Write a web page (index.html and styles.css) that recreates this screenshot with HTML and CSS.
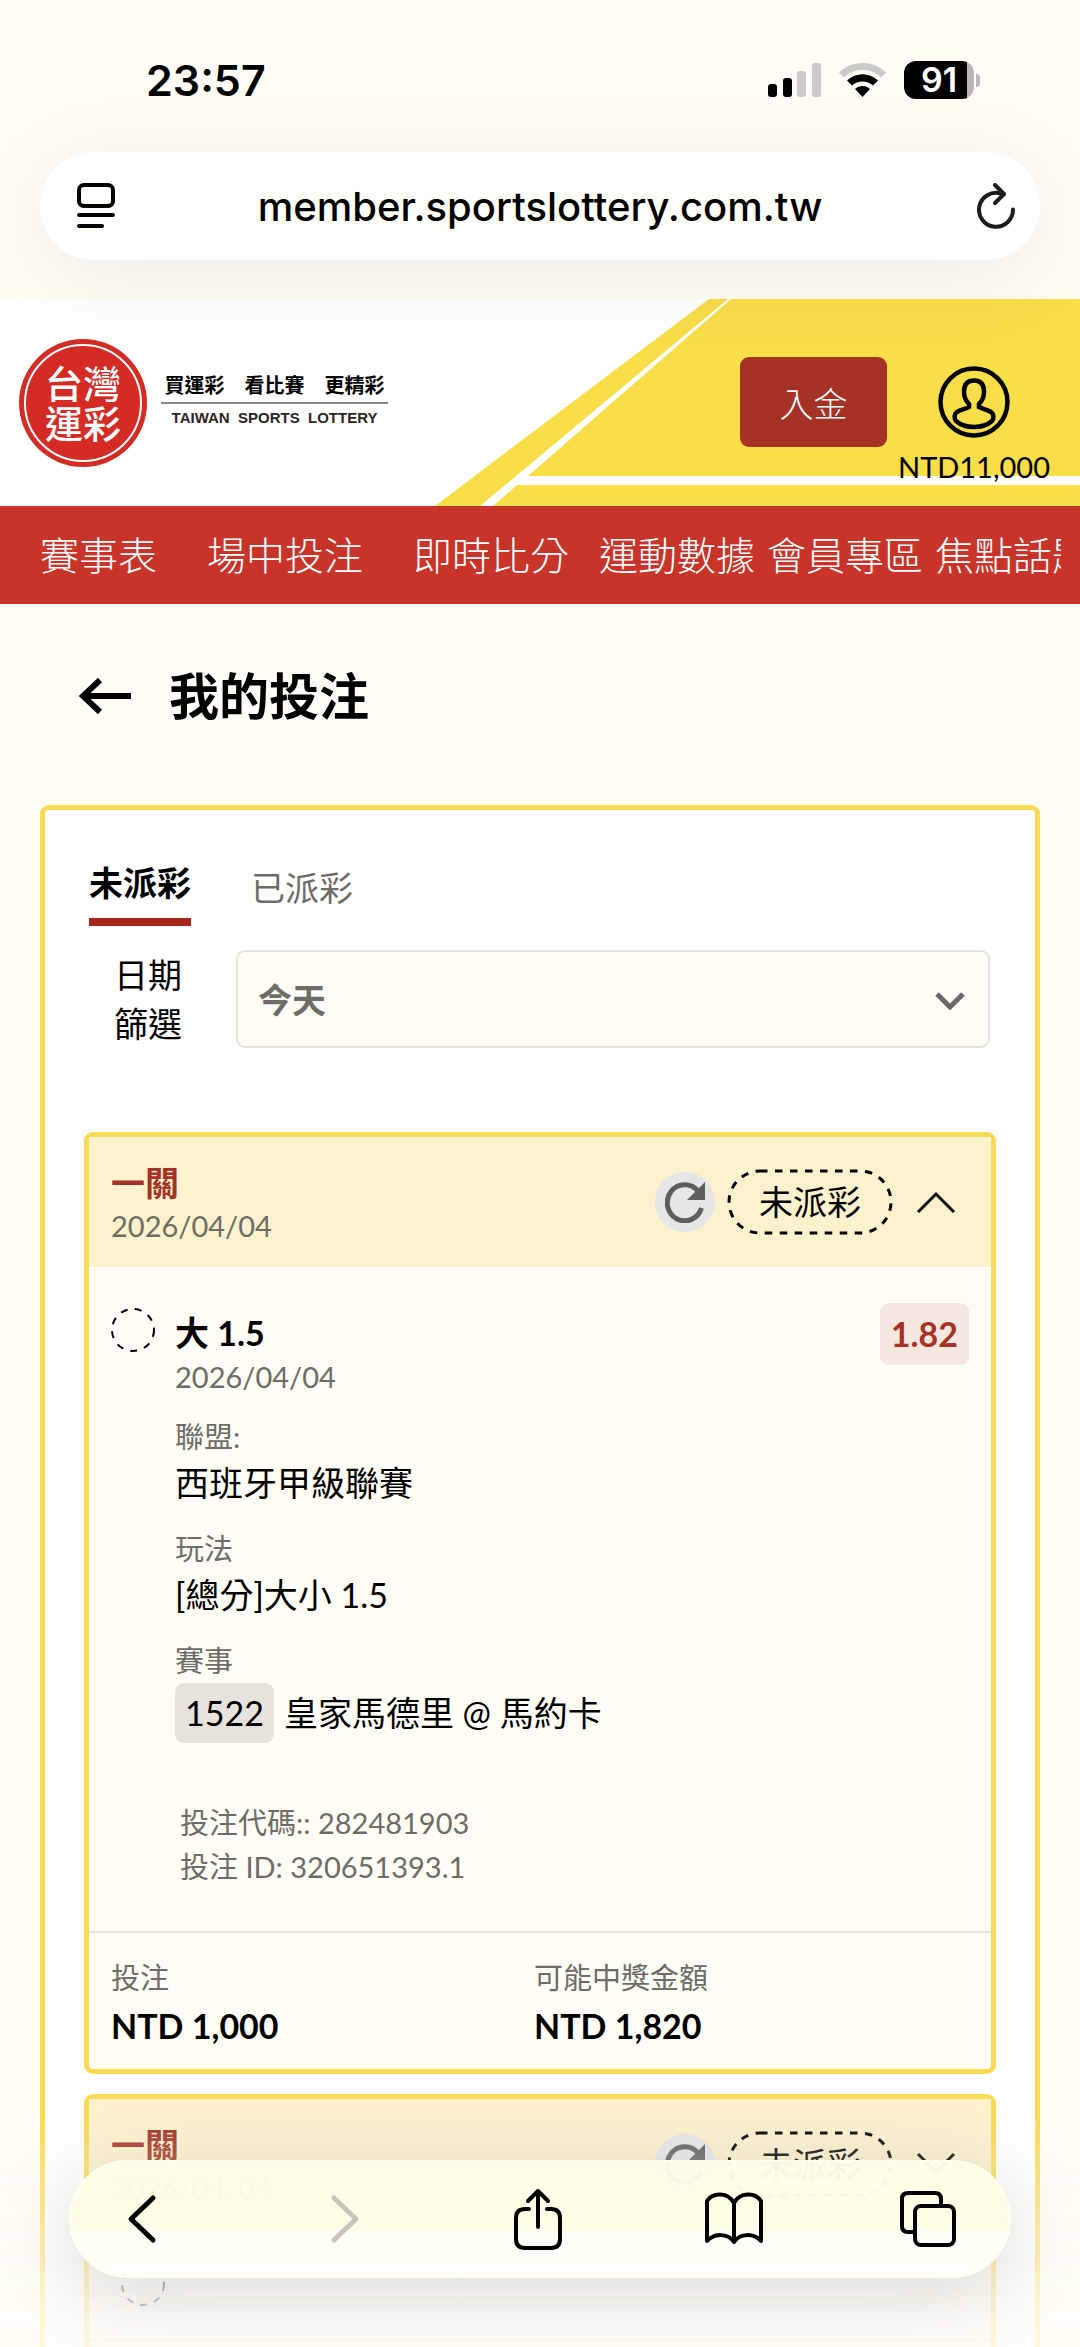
FILE: index.html
```html
<!DOCTYPE html>
<html lang="zh-Hant">
  <head>
    <meta charset="UTF-8" />
    <meta name="viewport" content="width=device-width, initial-scale=1" />
    <title>我的投注 | 台灣運彩</title>
    <link rel="stylesheet" href="styles.css">
  </head>
  <body>
    <div class="browser_top">
      <div class="status">
        <time class="status__time">23:57</time>
        <div class="status__icons">
          <svg width="53" height="34" viewBox="0 0 53 34" aria-hidden="true">
            <rect x="0" y="21" width="9" height="13" rx="3" />
            <rect x="15" y="15" width="9" height="19" rx="3" />
            <rect x="29" y="8" width="9" height="26" rx="3" fill="#cbcac4" />
            <rect x="44" y="0" width="9" height="34" rx="3" fill="#cbcac4" />
          </svg>
          <svg width="47" height="34" viewBox="0 0 47 34" aria-hidden="true">
            <path d="M0 9.500C13-3.200 34-3.200 47 9.500L42 14.500C32 4.500 15 4.500 5 14.500Z" fill="#cbcac4" />
            <path d="M8 17.500C17 9 30 9 39 17.500L34 22.500C28 17 19 17 13 22.500Z" />
            <path d="M16 26C20 22 27 22 31 26L23.500 34Z" />
          </svg>
          <div class="battery"><span class="battery__value">91</span></div>
        </div>
      </div>
      <div class="address">
        <button type="button" class="icon_button" aria-label="頁面選單">
          <svg width="38" height="46" viewBox="0 0 38 46" fill="none" stroke="#000" stroke-width="4" stroke-linecap="round">
            <rect x="2" y="2" width="34" height="21" rx="5" />
            <path d="M2 32H36M2 43H25" />
          </svg>
        </button>
        <span class="address__url">member.sportslottery.com.tw</span>
        <button type="button" class="icon_button" aria-label="重新載入">
          <svg width="38" height="46" viewBox="0 0 38 46" fill="none" stroke="#1c1c18" stroke-width="4" stroke-linecap="round" stroke-linejoin="round">
            <path d="M24 10.500A17 17 0 1 0 36 26.500M18 2L27 11L18 20" />
          </svg>
        </button>
      </div>
    </div>

    <header class="header">
      <svg class="header__bg" viewBox="0 0 1080 207" preserveAspectRatio="xMaxYMid slice" aria-hidden="true">
        <path d="M709 0H1080V207H435Z" fill="#f8de49" />
        <path d="M728 0H731L528 177H1080V186H517L493 207H480Z" fill="#fff" />
      </svg>
      <a href="#" class="logo">
        <span class="logo__mark"><span class="logo__ring">台灣<br>運彩</span></span>
        <span class="logo__texts">
          <span class="logo__slogan">買運彩　看比賽　更精彩</span>
          <span class="logo__en">TAIWAN  SPORTS  LOTTERY</span>
        </span>
      </a>
      <div class="account">
        <button type="button" class="deposit">入金</button>
        <a href="#" class="user">
          <svg width="72" height="74" viewBox="0 0 72 74" fill="none" stroke="#000" stroke-width="4.500" aria-hidden="true">
            <circle cx="36" cy="37" r="33.500" />
            <path d="M31 42V39C28 36 26 32 26 27C26 19 30 15.500 36 15.500S46 19 46 27C46 32 44 36 41 39V42C45 44 49 44.500 53 47C56 49 56 54 54 56C45 64 27 64 18 56C16 54 16 49 19 47C23 44.500 28 44 31 42Z" />
          </svg>
          <span class="user__balance">NTD11,000</span>
        </a>
      </div>
    </header>

    <nav class="nav">
      <ul class="nav__list">
        <li class="nav__item nav__item--wide"><a href="#">賽事表</a></li>
        <li class="nav__item nav__item--wide"><a href="#">場中投注</a></li>
        <li class="nav__item nav__item--middle"><a href="#">即時比分</a></li>
        <li class="nav__item"><a href="#">運動數據</a></li>
        <li class="nav__item"><a href="#">會員專區</a></li>
        <li class="nav__item"><a href="#">焦點話題</a></li>
      </ul>
    </nav>

    <main class="main">
      <div class="page_title">
        <a href="#" class="page_title__back" aria-label="返回">
          <svg width="52" height="36" viewBox="0 0 52 36" fill="none" stroke="#000" stroke-width="6">
            <path d="M4 18H52M21 2L4 18L21 34" />
          </svg>
        </a>
        <h1 class="page_title__text">我的投注</h1>
      </div>

      <section class="panel">
        <div class="tabs" role="tablist">
          <button type="button" role="tab" aria-selected="true" class="tab tab--active">未派彩</button>
          <button type="button" role="tab" aria-selected="false" class="tab">已派彩</button>
        </div>
        <div class="filter">
          <label for="date_filter" class="filter__label">日期篩選</label>
          <div class="filter__box">
            <select id="date_filter" name="date" class="filter__select">
              <option>今天</option>
            </select>
            <svg class="filter__arrow" width="30" height="18" viewBox="0 0 30 18" fill="none" stroke="#6a6963" stroke-width="5" aria-hidden="true">
              <path d="M2 2L15 15L28 2" />
            </svg>
          </div>
        </div>

        <article class="bet">
          <header class="bet__header">
            <div class="bet__heading">
              <h2 class="bet__title">一關</h2>
              <time class="bet__date">2026/04/04</time>
            </div>
            <button type="button" class="refresh" aria-label="更新">
              <svg width="40" height="41" viewBox="0 0 40 41" aria-hidden="true">
                <path d="M33 9A17.500 18 0 1 0 36.500 26" fill="none" stroke="#5d5e60" stroke-width="5" />
                <path d="M40 0V18H22Z" fill="#5d5e60" />
              </svg>
            </button>
            <span class="badge">
              <svg class="badge__line" width="166" height="66" fill="none" stroke="#000" stroke-width="3" stroke-dasharray="7.500 7.500" aria-hidden="true"><rect x="2" y="2" width="162" height="62" rx="31" /></svg>
              未派彩
            </span>
            <button type="button" class="toggle" aria-label="收合">
              <svg width="38" height="22" viewBox="0 0 38 22" fill="none" stroke="#000" stroke-width="3"><path d="M1 21L19 3L37 21" /></svg>
            </button>
          </header>
          <div class="bet__body">
            <svg class="bet__state" width="44" height="46" viewBox="0 0 44 46" fill="none" stroke="#000" stroke-width="2" stroke-dasharray="7 7.300" aria-hidden="true"><circle cx="22" cy="23" r="21" /></svg>
            <div class="bet__detail">
              <p class="bet__pick">大 1.5</p>
              <time class="bet__time">2026/04/04</time>
              <dl class="info">
                <dt>聯盟:</dt>
                <dd>西班牙甲級聯賽</dd>
                <dt>玩法</dt>
                <dd>[總分]大小 1.5</dd>
                <dt>賽事</dt>
                <dd class="info__match"><span class="info__code">1522</span>皇家馬德里 @ 馬約卡</dd>
              </dl>
              <div class="bet__ids">
                <p>投注代碼:: 282481903</p>
                <p>投注 ID: 320651393.1</p>
              </div>
            </div>
            <span class="odds">1.82</span>
          </div>
          <dl class="bet__footer">
            <div><dt>投注</dt><dd>NTD 1,000</dd></div>
            <div><dt>可能中獎金額</dt><dd>NTD 1,820</dd></div>
          </dl>
        </article>

        <article class="bet">
          <header class="bet__header">
            <div class="bet__heading">
              <h2 class="bet__title">一關</h2>
              <time class="bet__date">2026/04/04</time>
            </div>
            <button type="button" class="refresh" aria-label="更新">
              <svg width="40" height="41" viewBox="0 0 40 41" aria-hidden="true">
                <path d="M33 9A17.500 18 0 1 0 36.500 26" fill="none" stroke="#5d5e60" stroke-width="5" />
                <path d="M40 0V18H22Z" fill="#5d5e60" />
              </svg>
            </button>
            <span class="badge">
              <svg class="badge__line" width="166" height="66" fill="none" stroke="#000" stroke-width="3" stroke-dasharray="7.500 7.500" aria-hidden="true"><rect x="2" y="2" width="162" height="62" rx="31" /></svg>
              未派彩
            </span>
            <button type="button" class="toggle" aria-label="展開">
              <svg width="38" height="22" viewBox="0 0 38 22" fill="none" stroke="#000" stroke-width="3"><path d="M1 1L19 19L37 1" /></svg>
            </button>
          </header>
          <div class="bet__summary">
            <svg width="44" height="46" viewBox="0 0 44 46" fill="none" stroke="#000" stroke-width="2" stroke-dasharray="7 7.300" aria-hidden="true"><circle cx="22" cy="23" r="21" /></svg>
          </div>
          <div class="bet__footer"></div>
        </article>
      </section>
    </main>

    <div class="browser_bottom">
      <div class="toolbar">
        <button type="button" class="icon_button" aria-label="上一頁">
          <svg width="60" height="60" viewBox="0 0 60 60" fill="none" stroke="#000" stroke-width="5" stroke-linecap="round" stroke-linejoin="round"><path d="M31 9L9 30L31 51" /></svg>
        </button>
        <button type="button" class="icon_button" aria-label="下一頁" disabled>
          <svg width="60" height="60" viewBox="0 0 60 60" fill="none" stroke="#c6c4bb" stroke-width="5" stroke-linecap="round" stroke-linejoin="round"><path d="M18 9L40 30L18 51" /></svg>
        </button>
        <button type="button" class="icon_button" aria-label="分享">
          <svg width="60" height="64" viewBox="0 0 60 64" fill="none" stroke="#000" stroke-width="4" stroke-linecap="round" stroke-linejoin="round"><path d="M19 22H15Q6 22 6 31V52Q6 61 15 61H41Q50 61 50 52V31Q50 22 41 22H37M28 40V4M18 14L28 4L38 14" /></svg>
        </button>
        <button type="button" class="icon_button" aria-label="書籤">
          <svg width="60" height="60" viewBox="0 0 60 60" fill="none" stroke="#000" stroke-width="4" stroke-linecap="round" stroke-linejoin="round"><path d="M30 14C24 3 9 3 3 12V52C10 44 24 44 30 53C36 44 50 44 57 52V12C51 3 36 3 30 14V53" /></svg>
        </button>
        <button type="button" class="icon_button" aria-label="分頁">
          <svg width="60" height="60" viewBox="0 0 60 60" fill="none" stroke="#000" stroke-width="4" stroke-linejoin="round"><rect x="17" y="17" width="39" height="39" rx="6" /><path d="M43 17V10Q43 4 37 4H10Q4 4 4 10V37Q4 43 10 43H17" /></svg>
        </button>
      </div>
    </div>
  </body>
</html>
```

FILE: styles.css
```css
:root {
  --color-bg: #fffdf6;
  --color-red: #c8342a;
  --color-dark-red: #a63226;
  --color-yellow: #f9da55;
  --color-line: #e6e3dc;
  --color-gray: #6d6c66;
  --text-large: 34px;
  --text-small: 29px;
  --radius: 9px;
  --font-system: Inter, 'Noto Sans CJK TC', sans-serif;
  color: #000;
  font-family: Lato, 'Noto Sans CJK TC', sans-serif;
  font-weight: 400;
}
* {
  margin: 0;
  padding: 0;
  box-sizing: border-box;
}
body {
  display: flex;
  flex-direction: column;
  height: 100vh;
  overflow: hidden;
  background-color: var(--color-bg);
}
button,
select {
  border: none;
  background: none;
  color: inherit;
  font: inherit;
}
a {
  color: inherit;
  text-decoration: none;
}
ul {
  list-style: none;
}
svg {
  display: block;
  flex-shrink: 0;
}
/* ブラウザ上部 */
.browser_top {
  flex-shrink: 0;
  position: relative;
  z-index: 1;
}
.status {
  display: flex;
  align-items: center;
  justify-content: space-between;
  height: 152px;
  padding: 8px 100px 0 146px;
  font-family: var(--font-system);
}
.status__time {
  font-size: 43px;
  font-weight: 600;
}
.status__icons {
  display: flex;
  align-items: center;
  gap: 18px;
}
.battery {
  display: flex;
  align-items: center;
  gap: 2px;
}
.battery::after {
  content: '';
  width: 4px;
  height: 13px;
  border-radius: 0 4px 4px 0;
  background-color: #b9b8b3;
}
.battery__value {
  width: 70px;
  border-radius: 12px;
  background: linear-gradient(to right, #000 63px, #b9b8b3 63px);
  color: #fff;
  font-size: 34px;
  font-weight: 600;
  line-height: 38px;
  text-align: center;
}
.address {
  display: flex;
  align-items: center;
  height: 108px;
  margin: 0 40px 39px;
  padding: 0 25px 0 37px;
  border-radius: 54px;
  background-color: #fffffa;
  box-shadow: 0 16px 90px rgba(0, 0, 0, 0.08);
  font-family: var(--font-system);
}
.address__url {
  flex: 1;
  padding-right: 12px;
  font-size: 40px;
  font-weight: 500;
  text-align: center;
}
/* ヘッダー */
.header {
  display: flex;
  flex-shrink: 0;
  align-items: center;
  justify-content: space-between;
  height: 207px;
  padding: 0 30px 0 19px;
  background-color: #fff;
  position: relative;
}
.header__bg {
  width: 100%;
  height: 100%;
  position: absolute;
  inset: 0;
}
.logo {
  display: flex;
  align-items: center;
  gap: 14px;
  position: relative;
}
.logo__mark {
  padding: 5px;
  border-radius: 50%;
  background-color: #d42b24;
}
.logo__ring {
  display: flex;
  align-items: center;
  justify-content: center;
  width: 118px;
  height: 118px;
  border: 2px solid #fff;
  border-radius: 50%;
  color: #fff;
  font-size: 38px;
  font-weight: 500;
  line-height: 40px;
}
.logo__texts {
  width: 227px;
  padding-bottom: 6px;
  text-align: center;
}
.logo__slogan {
  display: block;
  border-bottom: 2px solid #8c8682;
  font-size: 20px;
  font-weight: 700;
  line-height: 34px;
}
.logo__en {
  display: block;
  color: #2e2522;
  font-family: 'Liberation Sans', sans-serif;
  font-size: 15px;
  font-weight: 700;
  line-height: 28px;
  white-space: pre;
}
.account {
  display: flex;
  align-items: flex-start;
  gap: 11px;
  padding-top: 37px;
  position: relative;
}
.deposit {
  width: 147px;
  height: 90px;
  border-radius: var(--radius);
  background-color: var(--color-dark-red);
  color: #fff;
  font-size: var(--text-large);
  font-weight: 300;
}
.user {
  display: flex;
  flex-direction: column;
  align-items: center;
  padding-top: 8px;
}
.user__balance {
  margin-top: 10px;
  font-size: var(--text-small);
  line-height: 36px;
}
/* ナビ */
.nav {
  flex-shrink: 0;
  padding: 0 19px 0 40px;
  background-color: var(--color-red);
  color: #fff;
}
.nav__list {
  display: flex;
  overflow: hidden;
}
.nav__item {
  flex-shrink: 0;
  margin-right: 12px;
  font-size: 39px;
  font-weight: 300;
  line-height: 98px;
}
.nav__item--middle {
  margin-right: 30px;
}
.nav__item--wide {
  margin-right: 50px;
}
/* コンテンツ */
.main {
  flex: 1;
  min-height: 0;
  overflow: hidden;
}
.page_title {
  display: flex;
  align-items: center;
  gap: 38px;
  padding: 62px 79px 79px;
}
.page_title__text {
  font-size: 50px;
  font-weight: 700;
  line-height: 60px;
}
.panel {
  margin: 0 40px;
  padding: 51px 39px 40px;
  border: 5px solid var(--color-yellow);
  border-radius: var(--radius);
  background-color: #fff;
}
/* タブ */
.tabs {
  display: flex;
  align-items: flex-start;
  gap: 60px;
  padding-left: 5px;
}
.tab {
  padding-top: 5px;
  color: var(--color-gray);
  font-size: var(--text-large);
  line-height: 44px;
}
.tab--active {
  padding: 0 0 13px;
  border-bottom: 8px solid #ac261f;
  color: #000;
  font-weight: 700;
}
/* 日付の絞り込み */
.filter {
  display: flex;
  gap: 54px;
  margin: 24px 6px 84px 30px;
}
.filter__label {
  width: 68px;
  font-size: var(--text-large);
  line-height: 49px;
}
.filter__box {
  flex: 1;
  position: relative;
}
.filter__select {
  width: 100%;
  height: 98px;
  padding: 0 20px;
  border: 2px solid var(--color-line);
  border-radius: var(--radius);
  background-color: var(--color-bg);
  color: var(--color-gray);
  font-size: var(--text-large);
  font-weight: 700;
  appearance: none;
}
.filter__arrow {
  position: absolute;
  top: 42px;
  right: 25px;
  pointer-events: none;
}
/* 投注カード */
.bet {
  border: 5px solid var(--color-yellow);
  border-radius: var(--radius);
  background-color: var(--color-bg);
}
.bet:not(:last-of-type) {
  margin-bottom: 20px;
}
.bet__header {
  display: flex;
  align-items: center;
  height: 130px;
  padding: 0 36px 0 22px;
  background-color: #fdf2cd;
}
.bet__heading {
  margin-right: auto;
  padding-top: 3px;
}
.bet__title {
  color: var(--color-dark-red);
  font-size: var(--text-large);
  font-weight: 700;
  line-height: 44px;
}
.bet__date,
.bet__time {
  display: block;
  color: var(--color-gray);
  font-size: var(--text-small);
  line-height: 42px;
}
.refresh {
  display: flex;
  align-items: center;
  justify-content: center;
  width: 60px;
  height: 60px;
  border-radius: 50%;
  background-color: #e5e6e8;
}
.badge {
  width: 166px;
  margin: 0 24px 0 12px;
  font-size: var(--text-large);
  line-height: 66px;
  text-align: center;
  position: relative;
}
.badge__line {
  position: absolute;
  inset: 0;
}
.bet__body {
  display: flex;
  align-items: flex-start;
  padding: 36px 22px 42px;
}
.bet__state {
  margin: 4px 20px 0 0;
}
.bet__detail {
  flex: 1;
  padding-top: 8px;
}
.bet__pick {
  font-size: var(--text-large);
  font-weight: 700;
  line-height: 44px;
}
.bet__time {
  line-height: 44px;
}
.info {
  margin-top: 16px;
}
.info dt,
.bet__footer dt {
  color: var(--color-gray);
  font-size: var(--text-small);
  line-height: 44px;
}
.info dd {
  margin-bottom: 20px;
  font-size: var(--text-large);
  line-height: 48px;
}
.info .info__match {
  display: flex;
  align-items: center;
  gap: 10px;
  margin-bottom: 58px;
}
.info__code {
  padding: 0 10px;
  border-radius: var(--radius);
  background-color: var(--color-line);
  line-height: 60px;
}
.bet__ids {
  padding-left: 5px;
  color: var(--color-gray);
  font-size: var(--text-small);
  line-height: 44px;
}
.odds {
  padding: 0 11px;
  border-radius: var(--radius);
  background-color: #f5e8e0;
  color: var(--color-dark-red);
  font-size: var(--text-large);
  font-weight: 700;
  line-height: 62px;
}
.bet__footer {
  display: grid;
  grid-template-columns: 1fr 1fr;
  padding: 23px 34px 17px 22px;
  border-top: 2px solid var(--color-line);
}
.bet__footer dd {
  font-size: var(--text-large);
  font-weight: 700;
  line-height: 52px;
}
.bet__summary {
  padding: 32px;
}
/* ブラウザ下部 */
.browser_bottom {
  padding: 50px 69px 69px;
  background: linear-gradient(to bottom, rgba(255, 253, 246, 0), rgba(255, 253, 246, 0.3) 30%, rgba(255, 253, 246, 0.78) 80%, rgba(255, 253, 246, 0.85));
  position: fixed;
  right: 0;
  bottom: 0;
  left: 0;
}
.toolbar {
  display: flex;
  align-items: center;
  justify-content: space-between;
  height: 118px;
  padding: 0 51px;
  border: 2px solid #fffff0;
  border-radius: 59px;
  background: linear-gradient(to bottom, rgba(255, 253, 230, 0.96) 55%, rgba(255, 255, 248, 0.98) 65%);
  box-shadow: 0 16px 80px rgba(0, 0, 0, 0.15);
}
```
